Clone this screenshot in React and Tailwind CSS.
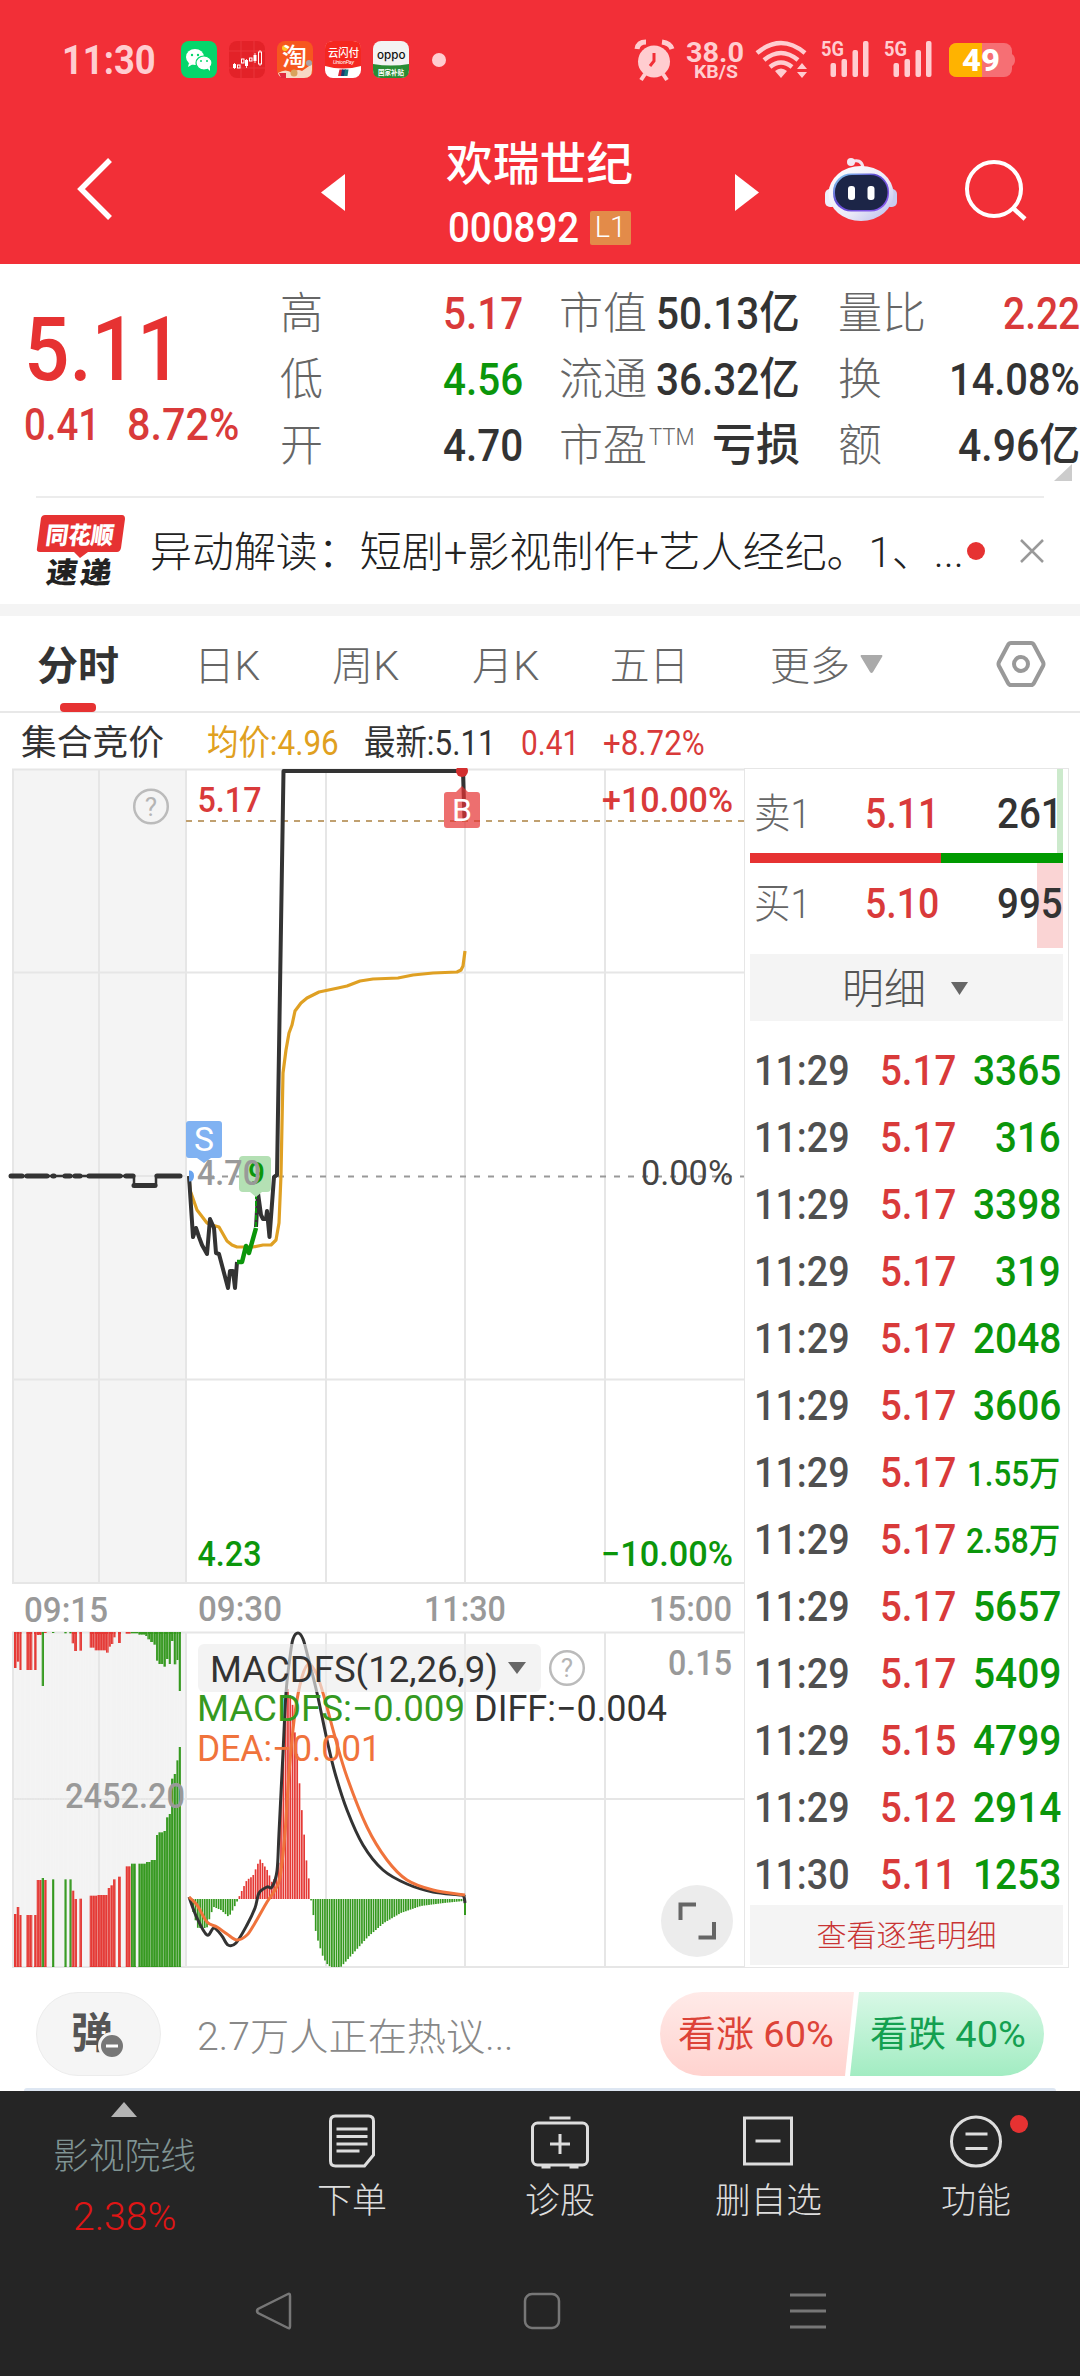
import React, { useLayoutEffect, useRef, useState } from "react";

const FONT = "font-['Roboto','Noto_Sans_CJK_SC',sans-serif]";

/* Text stretched horizontally so that it fills a box of the given width. */
function Fit({ w, className = "", children }) {
  const ref = useRef(null);
  const [scale, setScale] = useState(1);
  useLayoutEffect(() => {
    setScale(w / ref.current.offsetWidth);
  }, [w, children]);
  return (
    <span className={"block shrink-0 whitespace-nowrap " + className} style={{ width: w }}>
      <span ref={ref} className="inline-block origin-left" style={{ transform: `scaleX(${scale})` }}>
        {children}
      </span>
    </span>
  );
}

function AppIcons() {
  return (
    <svg width="265" height="38" viewBox="0 0 265 38" className="ml-[25px] overflow-visible">
      <rect x="0" y="0" width="36" height="37" rx="8" fill="#05d66b" />
      <ellipse cx="14" cy="16" rx="9" ry="8" fill="#fff" />
      <path d="M8 22l-1 4 5-3z" fill="#fff" />
      <ellipse cx="23" cy="22" rx="8" ry="7" fill="#fff" stroke="#05d66b" strokeWidth="1.2" />
      <path d="M26 27l3 3v-4z" fill="#fff" />
      <g fill="#05d66b">
        <circle cx="11" cy="14" r="1.2" /><circle cx="17" cy="14" r="1.2" />
        <circle cx="20" cy="20" r="1" /><circle cx="26" cy="20" r="1" />
      </g>
      <rect x="48" y="0" width="36" height="37" rx="8" fill="#e32228" />
      <g stroke="#ec3a40" strokeWidth=".8"><path d="M48 10h36M48 27h36M60 0v37M73 0v37" /></g>
      <g fill="#fff">
        <rect x="52" y="23" width="3" height="4" /><rect x="64" y="19" width="3" height="6" /><rect x="72.500" y="14" width="3" height="6" />
      </g>
      <g fill="none" stroke="#fff" strokeWidth="1">
        <rect x="56.500" y="24" width="2.500" height="3" /><rect x="60.500" y="18" width="2.500" height="4" />
        <rect x="68.500" y="17" width="2.500" height="3" /><rect x="77.500" y="11" width="3" height="12" />
        <path d="M53.500 22v6M65.500 18v9M74 12v10M79 9v2M79 23v2" strokeWidth=".8" />
      </g>
      <rect x="96" y="0" width="36" height="37" rx="8" fill="#f6571f" />
      <circle cx="104" cy="7" r="3" fill="#ffc928" />
      <path d="M97 32q8-5 14 0q5-5 10-2l10-7v6q0 8-8 8h-19q-6 0-7-5z" fill="#f7d9c4" />
      <path d="M98 32h7v5h-5z" fill="#e0283c" /><circle cx="113" cy="32" r="3.500" fill="#d9a35c" /><circle cx="128" cy="22" r="3" fill="#a9a3a8" />
      <text x="101" y="25" fontSize="25" fontWeight="500" fill="#fff" className="font-['Noto_Sans_CJK_SC',sans-serif]">淘</text>
      <rect x="144" y="0" width="36" height="37" rx="8" fill="#fff" />
      <path d="M144 25V8q0-8 8-8h20q8 0 8 8v17q-18 5-36 0z" fill="#f52720" />
      <text x="147" y="16" fontSize="11" fontWeight="500" fill="#fff" textLength="31" lengthAdjust="spacingAndGlyphs" className="font-['Noto_Sans_CJK_SC',sans-serif]">云闪付</text>
      <text x="152" y="22.500" fontSize="5.500" fontStyle="italic" fill="#fff" textLength="21" className="font-['Roboto',sans-serif]">UnionPay</text>
      <path d="M158.500 28.500h3.500l-1 6.500h-4z" fill="#d8283a" /><path d="M161 28.500h4l-1 6.500h-4z" fill="#173d74" /><path d="M164 28.500h3.500l-1 6.500h-3.500z" fill="#157b80" />
      <rect x="192" y="0" width="36" height="37" rx="8" fill="#f3f3f3" />
      <path d="M192 23q18 3 36 0v6q0 8-8 8h-20q-8 0-8-8z" fill="#2a8d34" />
      <text x="196" y="17.500" fontSize="12" fontWeight="500" fill="#111" textLength="28.500" lengthAdjust="spacingAndGlyphs" className="font-['Inter',sans-serif]">oppo</text>
      <text x="197" y="33.500" fontSize="7" fontWeight="700" fill="#fff" textLength="26" lengthAdjust="spacingAndGlyphs" className="font-['Noto_Sans_CJK_SC',sans-serif]">国家补贴</text>
      <circle cx="258" cy="19" r="7" fill="#ffcdd0" />
    </svg>
  );
}

function StatusIcons() {
  const c = "#ffcdd0";
  return (
    <svg width="384" height="44" viewBox="634 38 384 44" className="ml-auto mr-[62px] overflow-visible font-['Roboto',sans-serif]">
      <circle cx="654" cy="61.500" r="16" fill={c} />
      <path d="M645 74l-4 6M663 74l4 6" stroke={c} strokeWidth="4" />
      <path d="M637 49q1-7 9-7M662 42q8 1 10 7" stroke={c} strokeWidth="5" fill="none" />
      <path d="M654 53v8l-4 5" stroke="#f22f37" strokeWidth="3" fill="none" />
      <text x="686" y="61.500" fontSize="28.500" fontWeight="700" fill={c} textLength="58" lengthAdjust="spacingAndGlyphs">38.0</text>
      <text x="694" y="77.500" fontSize="18.500" fontWeight="700" fill={c} textLength="44" lengthAdjust="spacingAndGlyphs">KB/S</text>
      <g fill="none" stroke={c} strokeWidth="4.500">
        <path d="M757 53q24-20 48 0" /><path d="M764 60q17-14 34 0" /><path d="M770 67q11-9 22 0" />
      </g>
      <path d="M775 71q6-5 12 0l-6 7z" fill={c} />
      <path d="M797 69l5-6 5 6zM797 72l5 6 5-6z" fill={c} />
      {[0, 63].map((d) => (
        <g key={d} transform={`translate(${d} 0)`} fill={c}>
          <text x="821" y="56" fontSize="21" fontWeight="700" textLength="23" lengthAdjust="spacingAndGlyphs">5G</text>
          <rect x="830.500" y="63" width="5.500" height="14" rx="2" /><rect x="841.500" y="59" width="5.500" height="18" rx="2" />
          <rect x="852.500" y="50" width="5.500" height="27" rx="2" /><rect x="863" y="41" width="5.500" height="36" rx="2" />
        </g>
      ))}
      <rect x="949" y="43" width="63" height="34" rx="8" fill="#f66f74" />
      <path d="M957 43h25v34h-25q-8 0-8-8V51q0-8 8-8z" fill="#ffb300" />
      <path d="M1012 54q3 2 3 6t-3 6z" fill="#f66f74" />
      <text x="962" y="71" fontSize="31" fontWeight="800" fill="#fff" textLength="38" lengthAdjust="spacingAndGlyphs">49</text>
    </svg>
  );
}

function Robot() {
  return (
    <svg width="74" height="70" viewBox="824 155 74 70">
      <defs>
        <linearGradient id="shell" x1="0" y1="0" x2="1" y2="1"><stop offset="0" stopColor="#fff" /><stop offset=".6" stopColor="#ebe9f8" /><stop offset="1" stopColor="#b4b7ea" /></linearGradient>
        <linearGradient id="visor" x1="0" y1="0" x2="1" y2="1"><stop offset="0" stopColor="#8be3f5" /><stop offset=".4" stopColor="#5f4bd0" /><stop offset="1" stopColor="#8e5cf0" /></linearGradient>
      </defs>
      <path d="M851 163q10-4 12 5" stroke="#f3e2ee" strokeWidth="3" fill="none" />
      <circle cx="851" cy="163" r="4" fill="#f4e8f2" />
      <rect x="825" y="190" width="12" height="18" rx="5" fill="#eeeefa" /><rect x="885" y="190" width="12" height="18" rx="5" fill="#c9cbef" />
      <ellipse cx="861" cy="194.500" rx="32.500" ry="27.500" fill="url(#shell)" />
      <rect x="833" y="174.500" width="56" height="38" rx="18" fill="url(#visor)" />
      <rect x="835" y="176" width="52.500" height="35" rx="17" fill="#1c2547" />
      <rect x="848" y="187" width="7" height="14" rx="3" fill="#fff" /><rect x="867.500" y="187" width="7" height="14" rx="3" fill="#fff" />
    </svg>
  );
}

function Header() {
  return (
    <header className="h-[264px] bg-[#f22f37] text-white">
      <div className="flex h-[124px] items-center pb-[4px]">
        <Fit w={94} className="ml-[62px] text-[41px] font-bold leading-[48px] text-[#ffcdd0]">11:30</Fit>
        <AppIcons />
        <StatusIcons />
      </div>
      <div className="flex h-[130px] items-center">
        <svg width="40" height="66" viewBox="0 0 40 66" className="ml-[75px]"><path d="M35 4L6 33l29 29" fill="none" stroke="#fff" strokeWidth="5.500" /></svg>
        <svg width="24" height="37" viewBox="0 0 24 37" className="ml-[206px] mt-[6px]"><path d="M24 0v37L0 18.500z" fill="#fff" /></svg>
        <div className="ml-[101px] flex w-[187px] flex-col pt-[12px]">
          <Fit w={187} className="text-[46px] font-medium leading-[62px]">欢瑞世纪</Fit>
          <div className="flex items-center pl-[2px] pt-[3px]">
            <Fit w={131} className="text-[42px] font-medium leading-[60px]">000892</Fit>
            <span className="ml-[11px] flex h-[34px] w-[41px] shrink-0 items-center justify-center rounded-[2px] bg-[#e38b49] text-[29px] font-light leading-none">L1</span>
          </div>
        </div>
        <svg width="24" height="37" viewBox="0 0 24 37" className="ml-[102px] mt-[6px]"><path d="M0 0v37l24-18.500z" fill="#fff" /></svg>
        <div className="ml-[65px]"><Robot /></div>
        <svg width="64" height="64" viewBox="0 0 64 64" className="ml-[66px]"><circle cx="30" cy="32" r="27" fill="none" stroke="#fff" strokeWidth="4" /><path d="M49 51l12 11" stroke="#fff" strokeWidth="4.500" /></svg>
      </div>
    </header>
  );
}

const STATS = [
  { a: "高", av: "5.17", ac: "text-[#d93a3a]", b: "市值", bv: "50.13亿", bw: 144, c: "量比", cw: 88, cv: "2.22", cvw: 77, cc: "text-[#d93a3a]" },
  { a: "低", av: "4.56", ac: "text-[#0b960b]", b: "流通", bv: "36.32亿", bw: 144, c: "换", cw: 44, cv: "14.08%", cvw: 131, cc: "text-[#333]" },
  { a: "开", av: "4.70", ac: "text-[#333]", b: "市盈", ttm: true, bv: "亏损", bw: 88, c: "额", cw: 44, cv: "4.96亿", cvw: 122, cc: "text-[#333]" },
];

function Quote() {
  return (
    <section className="flex h-[232px] pt-[17px]">
      <div className="w-[280px] pl-[24px]">
        <Fit w={158} className="mt-[16px] text-[89px] font-medium leading-[106px] text-[#e63232]">5.11</Fit>
        <div className="flex gap-[27px] text-[45px] font-medium leading-[44px] text-[#d93a3a]">
          <Fit w={76}>0.41</Fit>
          <Fit w={112}>8.72%</Fit>
        </div>
      </div>
      <div className="relative flex-1 text-[45px] leading-[66px]">
        {STATS.map((s) => (
          <div key={s.a} className="flex h-[66px] font-medium text-[#333]">
            <Fit w={43} className="text-[44px] font-light text-[#666]">{s.a}</Fit>
            <Fit w={80} className={"ml-[120px] " + s.ac}>{s.av}</Fit>
            <Fit w={88} className="ml-[36px] text-[44px] font-light text-[#666]">{s.b}</Fit>
            <div className="flex w-[153px] justify-between">
              {s.ttm ? <Fit w={46} className="ml-[2px] text-[23px] font-light leading-[50px] text-[#666]">TTM</Fit> : <span />}
              <Fit w={s.bw}>{s.bv}</Fit>
            </div>
            <Fit w={s.cw} className="ml-[38px] text-[44px] font-light text-[#666]">{s.c}</Fit>
            <Fit w={s.cvw} className={"ml-auto " + s.cc}>{s.cv}</Fit>
          </div>
        ))}
        <svg width="18" height="17" viewBox="0 0 18 17" className="absolute right-[8px] top-[183px]"><path d="M18 0v17H0z" fill="#ccc" /></svg>
      </div>
    </section>
  );
}

function News() {
  return (
    <section className="mx-[36px] flex h-[108px] items-center border-t-2 border-[#ececec]">
      <svg width="90" height="74" viewBox="36 513 90 74" className="overflow-visible font-['Noto_Sans_CJK_SC',sans-serif]">
        <path d="M45 514h77q3 0 3 4l-4 29q-1 4-4 4H88l-8 6-6-6H40q-4 0-3-4l4-30q1-3 4-3z" fill="#e63232" />
        <g transform="skewX(-8)">
          <text x="121" y="543" fontSize="24" fontWeight="900" fill="#fff" textLength="68" lengthAdjust="spacingAndGlyphs">同花顺</text>
          <text x="127" y="582" fontSize="29" fontWeight="900" fill="#222" textLength="31" lengthAdjust="spacingAndGlyphs">速</text>
          <text x="161" y="582" fontSize="29" fontWeight="900" fill="#222" textLength="31" lengthAdjust="spacingAndGlyphs">递</text>
        </g>
      </svg>
      <Fit w={814} className="ml-[24px] pt-[3px] text-[42px] font-light leading-[60px] text-[#222]">异动解读：短剧+影视制作+艺人经纪。1、...</Fit>
      <span className="ml-[3px] h-[18px] w-[18px] shrink-0 rounded-full bg-[#e63232]" />
      <svg width="24" height="24" viewBox="0 0 24 24" className="ml-auto shrink-0"><path d="M1 1l22 22M23 1L1 23" stroke="#999" strokeWidth="2.500" /></svg>
    </section>
  );
}

function Tabs() {
  return (
    <nav className="flex h-[97px] border-b-2 border-[#e8e8e8] text-[40px] font-light leading-[102px] text-[#666]">
      <div className="relative ml-[37px] w-[82px] text-[#333]">
        <Fit w={82} className="font-bold">分时</Fit>
        <span className="absolute bottom-[-1px] left-[23px] h-[9px] w-[36px] rounded-[4px] bg-[#e63232]" />
      </div>
      <Fit w={66} className="ml-[75px]">日K</Fit>
      <Fit w={67} className="ml-[72px]">周K</Fit>
      <Fit w={67} className="ml-[73px]">月K</Fit>
      <Fit w={79} className="ml-[71px]">五日</Fit>
      <Fit w={80} className="ml-[81px]">更多</Fit>
      <svg width="23" height="19" viewBox="0 0 23 19" className="ml-[10px] mt-[39px]"><path d="M1 0h21q1 1 0 2L13 17q-1.500 2-3 0L1 2q-1-1 0-2z" fill="#aaa" /></svg>
      <svg width="50" height="48" viewBox="0 0 50 48" className="ml-[113px] mt-[24px]">
        <path d="M15 3h20q2 0 3 2l9 17q1 2 0 4l-9 17q-1 2-3 2H15q-2 0-3-2L3 26q-1-2 0-4l9-17q1-2 3-2z" fill="none" stroke="#999" strokeWidth="4" />
        <circle cx="25" cy="24" r="7" fill="none" stroke="#999" strokeWidth="4" />
      </svg>
    </nav>
  );
}

function InfoRow() {
  return (
    <div className="flex h-[55px] items-start pt-[6px] text-[35px] leading-[50px] text-[#333]">
      <Fit w={143} className="ml-[21px]">集合竞价</Fit>
      <Fit w={132} className="ml-[43px] text-[#e0a020]">均价:4.96</Fit>
      <Fit w={132} className="ml-[25px]">最新:5.11</Fit>
      <Fit w={58} className="ml-[25px] text-[#d93a3a]">0.41</Fit>
      <Fit w={102} className="ml-[24px] text-[#d93a3a]">+8.72%</Fit>
    </div>
  );
}

const RED = "#e53935";
const GREEN = "#35991f";

/* Call-auction bars: [left, right, extent, colour] in thirds of a pixel. */
const TOP_BARS = [
  [42, 50, 384, 1], [50, 58, 365, 1], [58, 65, 390, 1], [79, 97, 390, 1], [102, 110, 390, 1], [110, 125, 285, 1], [125, 132, 438, 0],
  [132, 140, 279, 1], [156, 163, 279, 0], [193, 200, 280, 0], [208, 215, 280, 0], [215, 222, 310, 1], [222, 231, 333, 1], [238, 246, 332, 1],
  [269, 284, 323, 1], [284, 318, 331, 1], [318, 326, 338, 1], [326, 333, 320, 1], [333, 340, 312, 1], [340, 347, 292, 1], [354, 363, 309, 1],
  [377, 392, 281, 1], [392, 415, 280, 0], [415, 435, 284, 0], [435, 442, 288, 0], [442, 450, 298, 0], [450, 460, 306, 0], [460, 468, 314, 0], [468, 475, 362, 0],
  [475, 490, 372, 0], [490, 498, 380, 0], [498, 506, 357, 0], [506, 513, 372, 0], [513, 521, 303, 0], [521, 529, 373, 0], [529, 536, 360, 0], [536, 543, 453, 0],
];
const LOW_BARS = [
  [42, 50, 1122, 1], [50, 58, 1101, 1], [58, 65, 1125, 1], [79, 97, 1125, 1], [102, 110, 1125, 1], [110, 125, 1020, 1], [125, 132, 1014, 0],
  [132, 140, 1020, 1], [156, 163, 1018, 0], [193, 200, 1018, 0], [208, 215, 1018, 0], [215, 223, 1052, 1], [223, 231, 1077, 1], [238, 246, 1076, 1],
  [269, 292, 1067, 1], [292, 323, 1065, 1], [323, 331, 1044, 1], [331, 339, 1036, 1], [339, 347, 1018, 1], [354, 363, 1010, 1], [377, 392, 979, 1],
  [393, 408, 971, 0], [415, 438, 971, 0], [438, 452, 966, 0], [452, 468, 960, 0], [468, 475, 885, 0], [475, 490, 877, 0], [490, 498, 873, 0],
  [498, 506, 832, 0], [506, 513, 822, 0], [513, 521, 716, 0], [521, 529, 702, 0], [529, 536, 661, 0], [536, 543, 621, 0],
];

const HIST = [
  [190, 1902], [193, 1915], [197, 1928], [206, 1928], [210, 1914], [213, 1907], [220, 1910], [228, 1917], [233, 1908], [237, 1900],
  [239, 1895], [246, 1880], [252, 1876], [259, 1859], [267, 1871], [271, 1882], [275, 1877], [278, 1862], [280, 1800], [284, 1705], [287.5, 1687],
  [292, 1706], [294, 1732], [297, 1760], [299, 1788], [301.5, 1816], [304, 1842], [306, 1865], [309, 1886], [310, 1899],
  [313, 1918], [315, 1932], [317.500, 1942], [320, 1950], [322.500, 1958], [327, 1965], [330, 1967], [340, 1967], [350, 1956], [367, 1937],
  [383, 1923], [400, 1913], [420, 1906], [443, 1903], [463, 1901],
];

function histAt(x) {
  for (let i = 1; i < HIST.length; i++) {
    const [x1, y1] = HIST[i];
    if (x <= x1) {
      const [x0, y0] = HIST[i - 1];
      return y0 + ((y1 - y0) * (x - x0)) / (x1 - x0);
    }
  }
  return HIST[HIST.length - 1][1];
}

/* Smooth curve through the points. */
function curve(pts) {
  let d = `M${pts[0][0]} ${pts[0][1]}`;
  for (let i = 0; i < pts.length - 1; i++) {
    const p0 = pts[i - 1] || pts[i], p1 = pts[i], p2 = pts[i + 1], p3 = pts[i + 2] || p2;
    d += `C${p1[0] + (p2[0] - p0[0]) / 6} ${p1[1] + (p2[1] - p0[1]) / 6} ${p2[0] - (p3[0] - p1[0]) / 6} ${p2[1] - (p3[1] - p1[1]) / 6} ${p2[0]} ${p2[1]}`;
  }
  return d;
}

const DIFF = [[189, 1897], [197, 1918], [207, 1935], [214, 1928], [222, 1936], [228, 1945], [236, 1943], [247, 1925], [255, 1908], [259, 1893], [267, 1887], [272, 1887], [277, 1871], [279, 1833], [283, 1753], [286, 1693], [290, 1657], [293, 1639], [298, 1633], [303, 1639], [308, 1657], [317, 1693], [327, 1740], [335, 1773], [347, 1810], [363, 1845], [383, 1870], [407, 1884], [433, 1892], [461, 1895], [464, 1897], [465, 1903]];
const DEA = [[189, 1897], [197, 1905], [207, 1922], [217, 1927], [227, 1934], [237, 1940], [247, 1935], [255, 1923], [267, 1902], [275, 1890], [280, 1877], [285, 1833], [289, 1773], [295, 1713], [302, 1677], [309, 1664], [317, 1675], [325, 1700], [335, 1737], [347, 1777], [367, 1827], [387, 1860], [407, 1880], [433, 1890], [465, 1895]];

const AUCTION_DOTS = [[10, 22], [26, 47], [52, 54], [64, 70], [74, 80], [88, 120], [125, 133]];

function Label({ x, y, w, size = 35, fill = "#999", weight = 500, children }) {
  return <text x={x} y={y} fontSize={size} fontWeight={weight} fill={fill} textLength={w} lengthAdjust="spacingAndGlyphs">{children}</text>;
}

function Help({ cx, cy }) {
  return (
    <g>
      <circle cx={cx} cy={cy} r="16.800" fill="none" stroke="#bbb" strokeWidth="2.500" />
      <text x={cx} y={cy + 9} textAnchor="middle" fontSize="26" fill="#b4b4b4">?</text>
    </g>
  );
}

function Chart() {
  const bars = [];
  for (let i = 0; i < 119; i++) {
    const x = 190 + i * 2.312;
    const y = histAt(x);
    bars.push(<rect key={i} x={x} width="1.700" y={Math.min(1899, y)} height={Math.max(1, Math.abs(y - 1899))} fill={y < 1899 ? RED : GREEN} />);
  }
  return (
    <svg width="744" height="1200" viewBox="0 768 744 1200" className="block shrink-0 font-['Roboto',sans-serif]">
      <path d="M12 769h174v814H12zM12 1632h174v335H12z" fill="#f4f4f4" />
      <g stroke="#e6e6e6" strokeWidth="2" fill="none">
        <path d="M12 769.500h732M12 972.500h732M12 1379.500h732M12 1583h732M12 1632.500h732M12 1799h732M12 1967h732M12 1176h175" />
        <path d="M13 769v814M99 769v814M186 769v814M326 769v814M465 769v814M605 769v814M13 1632v335M99 1632v335M186 1632v335M326 1632v335M465 1632v335M605 1632v335" />
      </g>
      <path d="M186 821H744" stroke="#c0a070" strokeWidth="2" strokeDasharray="6 6" />
      <path d="M208 1176.500H744" stroke="#999" strokeWidth="2" strokeDasharray="6 8" />

      {TOP_BARS.map(([a, b, e, r]) => <rect key={a} x={a / 3} width={(b - a) / 3} y="1632" height={(e - 276) / 3} fill={r ? RED : GREEN} />)}
      {LOW_BARS.map(([a, b, e, r]) => <rect key={a} x={a / 3} width={(b - a) / 3} y={1540 + e / 3} height={427 - e / 3} fill={r ? RED : GREEN} />)}
      <g stroke="#f4f4f4" strokeOpacity=".5" strokeWidth=".5">
        {Array.from({ length: 66 }, (_, i) => <path key={i} d={`M${16.6 + i * 2.53} 1634V1966`} />)}
      </g>
      {bars}
      <rect x="464" y="1899" width="2" height="16" fill={GREEN} />
      <path d={curve(DIFF)} fill="none" stroke="#333" strokeWidth="3" />
      <path d={curve(DEA)} fill="none" stroke="#f0733c" strokeWidth="3" />

      <path d="M10 1176H134V1185H156V1176H181" fill="none" stroke="#333" strokeWidth="2.500" />
      <g stroke="#333" strokeWidth="5" strokeLinecap="round">
        {AUCTION_DOTS.map(([a, b]) => <path key={a} d={`M${a + 1} 1176H${b}`} />)}
        <path d="M134 1185.500H155M157 1176H180" />
      </g>
      <path d="M189 1176L190 1190 197 1210 207 1223 212 1225 219 1227 227 1241 232 1245 237 1247H253L263 1245H271L276 1240 279 1223 281 1175 283 1073 286 1050 289 1033 292 1025 295 1011 301 1003 307 998 319 992 338 988 347 986 360 981 373 979 398 978 413 975 433 973 457 972 461 970 463 966 465 951" fill="none" stroke="#dfa023" strokeWidth="3.200" strokeLinejoin="round" />
      <path d="M189 1176L193 1237 196 1228 199 1237 202 1245 207 1254 210 1219 214 1228 216 1253 219 1254 228 1288 230 1271H233L235 1288 237 1262M256 1227L258 1193 261 1215 263 1219H266L267 1211 269.500 1237 274 1177 277 1175 283.500 771H463L464.500 821" fill="none" stroke="#333" strokeWidth="4" strokeLinejoin="round" />
      <path d="M237 1262H242L246 1246 249 1253 256 1228" fill="none" stroke="#0b960b" strokeWidth="4.500" strokeLinejoin="round" />
      <path d="M256 1227V1195" stroke="#0b960b" strokeWidth="2" strokeDasharray="5 2" />

      <circle cx="462" cy="771" r="6" fill="#d32f2f" />
      <path d="M447 792h9l6-6 6 6h9q3 0 3 3v30q0 3-3 3h-30q-3 0-3-3v-30q0-3 3-3z" fill="#e63232" fillOpacity=".7" />
      <Label x="452" y="821" w="20" size="32" weight="400" fill="#fff">B</Label>
      <path d="M189 1170.500q5 0 5 5.500t-5 5.500z" fill="#6aa4ee" />
      <path d="M189 1121h30q3 0 3 3v31q0 3-3 3h-8l-7 5-7-5h-8q-3 0-3-3v-31q0-3 3-3z" fill="#80b2f2" />
      <Label x="194" y="1151" w="20" size="33" weight="400" fill="#fff">S</Label>
      <path d="M243 1156h24q4 0 4 4v28q0 4-4 4h-5l-6 5-6-5h-7q-4 0-4-4v-28q0-4 4-4z" fill="#b4e0b4" />
      <Label x="248" y="1184" w="17" size="31" weight="500" fill="#0b960b">9</Label>
      <Label x="197" y="1185" w="64">4.70</Label>

      <Label x="197.500" y="812" w="64" fill="#d93a3a">5.17</Label>
      <Label x="602" y="812" w="131" fill="#d93a3a">+10.00%</Label>
      <Label x="641" y="1185" w="92" weight="400" fill="#444">0.00%</Label>
      <Label x="197.500" y="1566" w="64" fill="#0b960b">4.23</Label>
      <Label x="601" y="1566" w="132" fill="#0b960b">−10.00%</Label>
      <Label x="24" y="1622" w="84">09:15</Label>
      <Label x="198" y="1621" w="84">09:30</Label>
      <Label x="424" y="1621" w="82">11:30</Label>
      <Label x="649" y="1621" w="83">15:00</Label>
      <Help cx={151} cy={806.5} />

      <rect x="198" y="1644" width="343" height="48" rx="6" fill="#ededed" fillOpacity=".65" />
      <Label x="210" y="1682" w="288" size="36" weight="400" fill="#333">MACDFS(12,26,9)</Label>
      <path d="M508 1662h18l-9 12z" fill="#666" />
      <Help cx={567} cy={1668} />
      <Label x="668" y="1675" w="64">0.15</Label>
      <Label x="197" y="1721" w="268" size="36" weight="400" fill={GREEN}>MACDFS:−0.009</Label>
      <Label x="474" y="1721" w="193" size="36" weight="400" fill="#333">DIFF:−0.004</Label>
      <Label x="197" y="1761" w="184" size="36" weight="400" fill="#f0733c">DEA:−0.001</Label>
      <Label x="65" y="1808" w="120">2452.20</Label>
      <circle cx="697" cy="1921" r="36" fill="#ececec" />
      <path d="M680.500 1920v-15.500h15.500M714 1922v15.500h-15.500" fill="none" stroke="#666" strokeWidth="4" />
    </svg>
  );
}

const TRADES = [
  ["11:29", "5.17", "3365"], ["11:29", "5.17", "316"], ["11:29", "5.17", "3398"], ["11:29", "5.17", "319"], ["11:29", "5.17", "2048"],
  ["11:29", "5.17", "3606"], ["11:29", "5.17", "1.55万"], ["11:29", "5.17", "2.58万"], ["11:29", "5.17", "5657"], ["11:29", "5.17", "5409"],
  ["11:29", "5.15", "4799"], ["11:29", "5.12", "2914"], ["11:30", "5.11", "1253"],
];

function OrderRow({ label, price, vol, strip, className = "" }) {
  return (
    <div className={"relative flex shrink-0 items-center text-[42px] font-medium leading-[60px] " + className}>
      <span className={"absolute right-0 " + strip} />
      <Fit w={57} className="ml-[4px] text-[41px] font-light text-[#666]">{label}</Fit>
      <Fit w={74} className="relative ml-[54px] text-[#d93a3a]">{price}</Fit>
      <Fit w={66} className="relative ml-[58px] text-[#333]">{vol}</Fit>
    </div>
  );
}

function OrderPanel() {
  return (
    <aside className="flex h-[1200px] w-[325px] flex-col border border-[#e6e6e6] px-[5px] text-[#333]">
      <OrderRow label="卖1" price="5.11" vol="261" className="h-[84px] pt-[5px]" strip="top-0 h-[84px] w-[6px] bg-[#cceacc]" />
      <div className="flex h-[10px] shrink-0">
        <span className="w-[191px] bg-[#e63232]" />
        <span className="flex-1 bg-[#009a00]" />
      </div>
      <OrderRow label="买1" price="5.10" vol="995" className="h-[85px] pb-[3px]" strip="top-0 h-[85px] w-[26px] bg-[#fad4d4]" />
      <div className="mt-[6px] flex h-[67px] shrink-0 items-center bg-[#f4f4f4] pl-[92px] text-[42px] font-light leading-[60px] text-[#555]">
        <Fit w={84} className="pt-[5px]">明细</Fit>
        <svg width="17" height="13" viewBox="0 0 17 13" className="ml-[25px] mt-[2px]"><path d="M0 0h17L8.500 13z" fill="#666" /></svg>
      </div>
      <div className="mb-[-3px] mt-[16px] shrink-0">
        {TRADES.map(([t, p, v], i) => (
          <div key={i} className="flex h-[67px] items-center text-[42px] font-medium leading-[60px]">
            <Fit w={96} className="ml-[4px] text-[#505050]">{t}</Fit>
            <Fit w={76} className="ml-[30px] text-[#d93a3a]">{p}</Fit>
            {v.endsWith("万") ? (
              <Fit w={v[0] === "1" ? 93 : 94} className="ml-auto mr-[3px] pt-[4px] text-[35px] text-[#0b960b]">{v}</Fit>
            ) : (
              <Fit w={v.length * 22} className="ml-auto mr-[2px] text-[#0b960b]">{v}</Fit>
            )}
          </div>
        ))}
      </div>
      <div className="flex h-[60px] shrink-0 items-center justify-center bg-[#f4f4f4] text-[30px] font-light text-[#c93434]">
        <Fit w={180}>查看逐笔明细</Fit>
      </div>
    </aside>
  );
}

function Gossip() {
  return (
    <section className="flex h-[120px] items-center pt-[12px]">
      <div className="relative ml-[36px] flex h-[84px] w-[125px] items-center justify-center rounded-full border border-[#ececec] bg-[#f5f5f5] pr-[13px] text-[42px] font-bold leading-none text-[#555]">
        弹
        <svg width="30" height="30" viewBox="0 0 30 30" className="absolute left-[60px] top-[38px]"><circle cx="15" cy="15" r="12.500" fill="#777" stroke="#f5f5f5" strokeWidth="3" /><path d="M9 15h12" stroke="#fff" strokeWidth="3" /></svg>
      </div>
      <Fit w={317} className="ml-[36px] pt-[5px] text-[38px] font-light leading-[60px] text-[#888]">2.7万人正在热议...</Fit>
      <div className="relative ml-auto mr-[36px] flex h-[84px] w-[384px] items-center overflow-hidden rounded-full text-[36px] font-light leading-[60px]">
        <svg width="384" height="84" viewBox="0 0 384 84" className="absolute left-0 top-0">
          <defs>
            <linearGradient id="up" x1="0" y1="0" x2="0" y2="1"><stop offset="0" stopColor="#ffeae8" /><stop offset="1" stopColor="#ffd3cf" /></linearGradient>
            <linearGradient id="down" x1="0" y1="0" x2="0" y2="1"><stop offset="0" stopColor="#d8f8e6" /><stop offset="1" stopColor="#a2ecc2" /></linearGradient>
          </defs>
          <path d="M0 0h194l-9 84H0z" fill="url(#up)" />
          <path d="M199 0h185v84H190z" fill="url(#down)" />
        </svg>
        <Fit w={156} className="relative ml-[18px] pt-[2px] font-normal text-[#dd4338]">看涨 60%</Fit>
        <Fit w={156} className="relative ml-[36px] pt-[2px] font-normal text-[#14a050]">看跌 40%</Fit>
      </div>
    </section>
  );
}

const ACTIONS = [
  { label: "下单", w: 70, icon: <><path d="M8 3h33q5 0 5 5v34l-9 11H8q-5 0-5-5V8q0-5 5-5z" /><path d="M9 16h31M9 23.500h31M9 31h31M9 38h23" /></> },
  { label: "诊股", w: 70, icon: <><rect x="-3" y="10" width="55" height="42" rx="5" /><path d="M14 5h21M24.500 21v20M14.500 31h20M6 54h9M34 54h9" /></> },
  { label: "删自选", w: 107, icon: <><rect x="1" y="5" width="47" height="46" /><path d="M12 28h25" /></> },
  { label: "功能", w: 70, dot: true, icon: <><circle cx="24.500" cy="28.500" r="24.500" /><path d="M14 21h22M14 35.500h22" /></> },
];

function BottomBar() {
  return (
    <footer className="h-[285px] bg-[#252525] text-[#ddd]">
      <div className="flex h-[165px]">
        <div className="flex w-[248px] flex-col items-center pt-[11px]">
          <svg width="26" height="15" viewBox="0 0 26 15"><path d="M13 0l13 15H0z" fill="#b4b4b4" /></svg>
          <Fit w={143} className="mt-[12px] text-[36px] font-light leading-[56px] text-[#7f9393]">影视院线</Fit>
          <Fit w={103} className="mt-[4px] text-[38px] font-light leading-[56px] text-[#e01515]">2.38%</Fit>
        </div>
        {ACTIONS.map((a) => (
          <div key={a.label} className="relative flex w-[208px] flex-col items-center pt-[22px]">
            <svg width="60" height="58" viewBox="-5.500 0 60 58" fill="none" stroke="#ddd" strokeWidth="3">{a.icon}</svg>
            <Fit w={a.w} className="mt-[3px] text-[35px] font-light leading-[56px]">{a.label}</Fit>
            {a.dot && <span className="absolute left-[138px] top-[24px] h-[18px] w-[18px] rounded-full bg-[#e63232]" />}
          </div>
        ))}
      </div>
      <div className="flex h-[110px] items-center pl-[254px]">
        <svg width="38" height="40" viewBox="0 0 38 40" fill="none" stroke="#777" strokeWidth="2.500"><path d="M34 3q2-1 2 2v30q0 3-2 2L4 22q-2-2 0-4z" /></svg>
        <svg width="38" height="38" viewBox="0 0 38 38" fill="none" stroke="#777" strokeWidth="2.500" className="ml-[231px]"><rect x="2" y="2" width="34" height="34" rx="7" /></svg>
        <svg width="36" height="38" viewBox="0 0 36 38" stroke="#777" strokeWidth="3" className="ml-[229px]"><path d="M0 3h36M0 19h36M0 35h36" /></svg>
      </div>
    </footer>
  );
}

export default function App() {
  return (
    <div className={"flex h-[2376px] w-[1080px] flex-col overflow-hidden bg-white " + FONT}>
      <Header />
      <Quote />
      <News />
      <div className="h-[12px] bg-[#f4f4f4]" />
      <Tabs />
      <InfoRow />
      <div className="flex h-[1200px]">
        <Chart />
        <OrderPanel />
      </div>
      <Gossip />
      <div className="mx-[24px] h-[3px] rounded-t-[8px] bg-[#dde6f2]" />
      <BottomBar />
    </div>
  );
}
